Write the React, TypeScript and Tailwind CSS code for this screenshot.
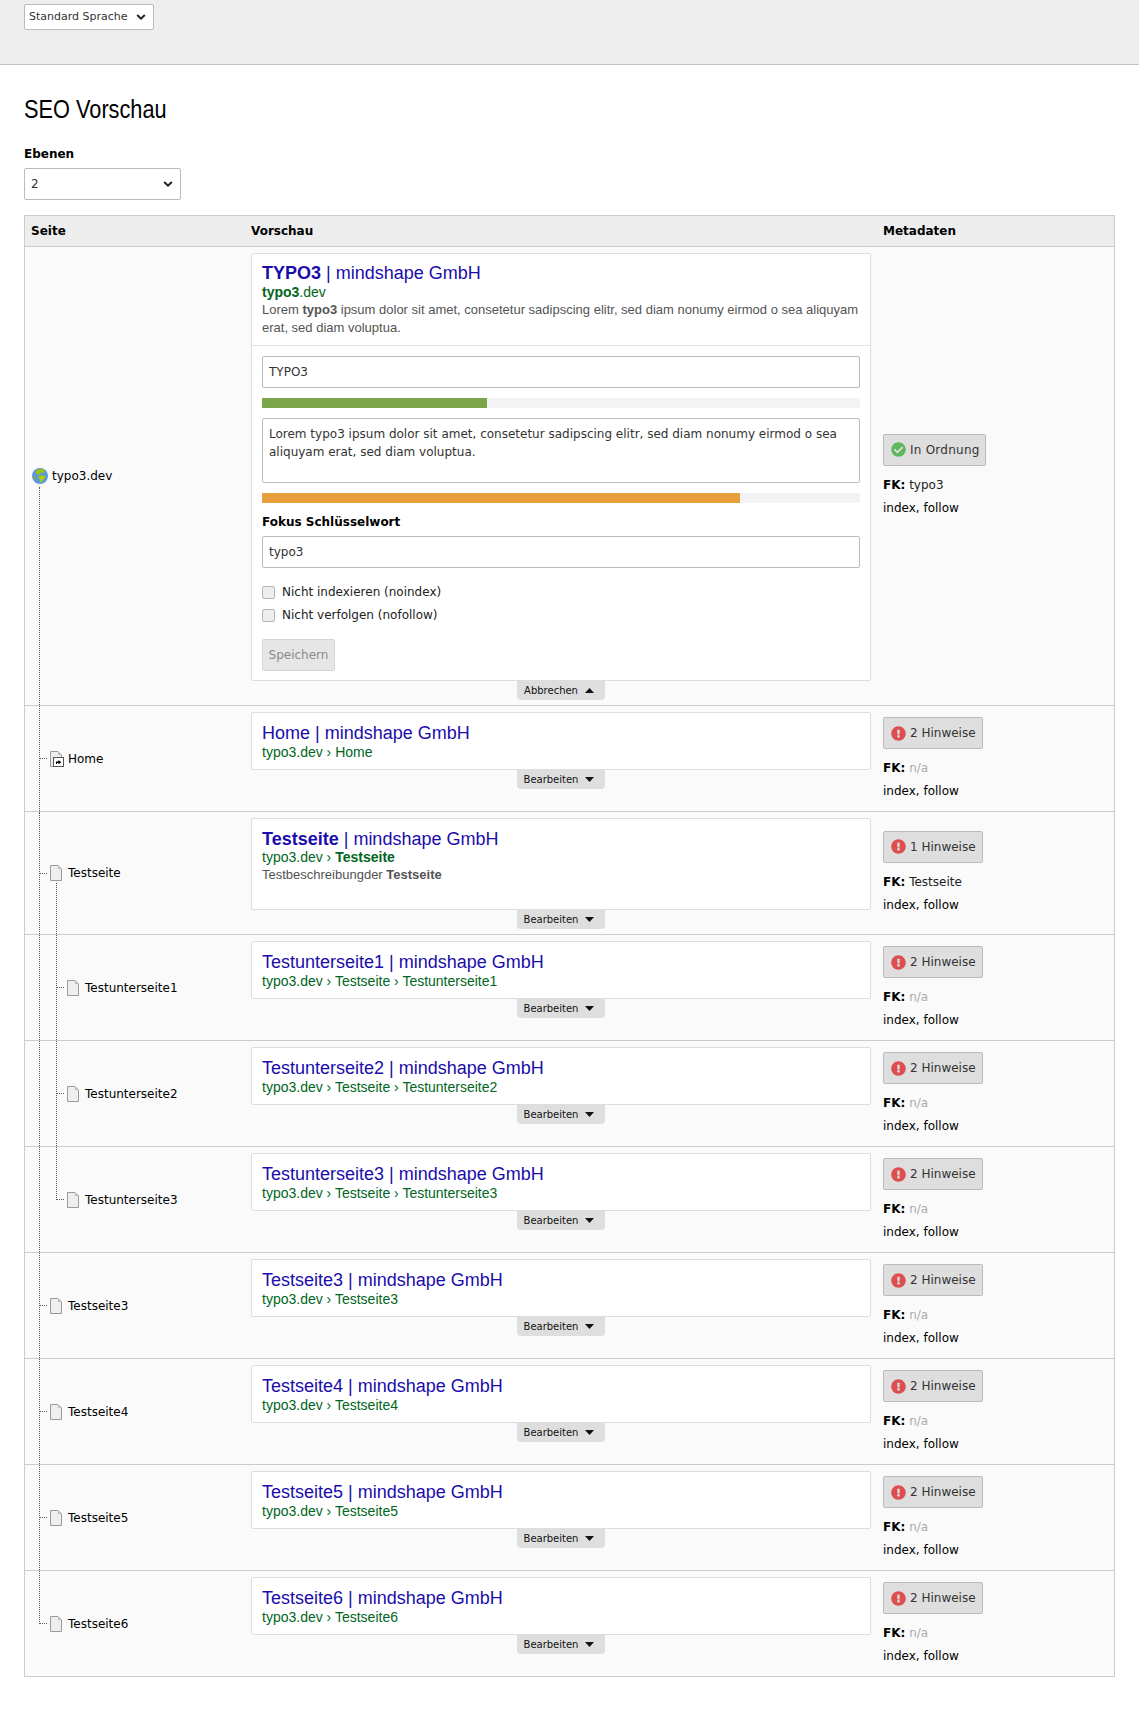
import { FaCheckCircle, FaExclamationCircle } from "react-icons/fa"

type Page = {
  name: string
  depth: 1 | 2
  crumbs: string[]
  hints: number
  focus?: string
  description?: string
  icon?: "shortcut"
  sub?: "start" | "middle" | "end"
  boldTitle?: boolean
}

const pages: Page[] = [
  { name: "Home", depth: 1, crumbs: ["Home"], hints: 2, icon: "shortcut" },
  {
    name: "Testseite",
    depth: 1,
    crumbs: ["Testseite"],
    hints: 1,
    focus: "Testseite",
    description: "Testseite",
    sub: "start",
    boldTitle: true,
  },
  { name: "Testunterseite1", depth: 2, crumbs: ["Testseite", "Testunterseite1"], hints: 2, sub: "middle" },
  { name: "Testunterseite2", depth: 2, crumbs: ["Testseite", "Testunterseite2"], hints: 2, sub: "middle" },
  { name: "Testunterseite3", depth: 2, crumbs: ["Testseite", "Testunterseite3"], hints: 2, sub: "end" },
  { name: "Testseite3", depth: 1, crumbs: ["Testseite3"], hints: 2 },
  { name: "Testseite4", depth: 1, crumbs: ["Testseite4"], hints: 2 },
  { name: "Testseite5", depth: 1, crumbs: ["Testseite5"], hints: 2 },
  { name: "Testseite6", depth: 1, crumbs: ["Testseite6"], hints: 2 },
]

function Chevron() {
  return (
    <svg width="10" height="7" viewBox="0 0 10 7" className="pointer-events-none absolute top-1/2 right-[8px] -translate-y-1/2">
      <path d="M1.2 1.5 5 5.2 8.8 1.5" fill="none" stroke="#222" strokeWidth="2" />
    </svg>
  )
}

function Caret({ up }: { up?: boolean }) {
  return (
    <svg width="9" height="5" viewBox="0 0 9 5">
      <path d={up ? "M0 5 4.5 0 9 5Z" : "M0 0 9 0 4.5 5Z"} fill="#111" />
    </svg>
  )
}

function Globe() {
  return (
    <svg width="16" height="16" viewBox="0 0 16 16" className="shrink-0">
      <circle cx="8" cy="8" r="8" fill="#5f97dc" />
      <path d="M6 1.2 10.5.8 13 3 11.5 5 9 4.6 8 6.5 4.5 6.2 3.6 4Z" fill="#9cc40c" />
      <path d="M7 7.5 12 7.4 13.6 9 11.6 11 10 14 8.4 14.4 8 11 6.6 9.6Z" fill="#a8d000" />
      <path d="M1 8 3 9 3.6 11.6 1.8 11Z" fill="#8ab414" />
    </svg>
  )
}

function PageIcon({ shortcut }: { shortcut?: boolean }) {
  return (
    <svg width="14" height="16" viewBox="0 0 14 16" className="shrink-0">
      <path d="M.5.5H8L11.5 4V15.5H.5Z" fill="#eeeeee" stroke="#9a9a9a" />
      <path d="M8 .8V4H11.2Z" fill="#bdbdbd" />
      {shortcut && (
        <g>
          <rect x="3.5" y="6.5" width="10" height="9" fill="#fff" stroke="#555" />
          <path d="M6 13V10.6H8.4V9L11.4 11.2 8.4 13.2V12H7V13Z" fill="#000" />
        </g>
      )}
    </svg>
  )
}

function TreeLines({ main, sub }: { main: "start" | "middle" | "end"; sub?: Page["sub"] }) {
  return (
    <>
      {main === "start" && <div className="absolute top-[calc(50%+11px)] bottom-0 left-[14px] border-l border-dotted border-[#555]" />}
      {main === "middle" && <div className="absolute top-0 bottom-0 left-[14px] border-l border-dotted border-[#555]" />}
      {main === "end" && <div className="absolute top-0 h-1/2 left-[14px] border-l border-dotted border-[#555]" />}
      {sub === "start" && <div className="absolute top-[calc(50%+10px)] bottom-0 left-[31px] border-l border-dotted border-[#555]" />}
      {sub === "middle" && <div className="absolute top-0 bottom-0 left-[31px] border-l border-dotted border-[#555]" />}
      {sub === "end" && <div className="absolute top-0 h-1/2 left-[31px] border-l border-dotted border-[#555]" />}
    </>
  )
}

function Snippet({ page }: { page: Page }) {
  return (
    <div className="px-[10px] pt-[10px] pb-[8px] font-['Liberation_Sans',Arial,sans-serif]">
      <div className="text-[18px] leading-[20px] text-[#1a0dab]">
        {page.boldTitle ? <b>{page.name}</b> : page.name} | mindshape GmbH
      </div>
      <div className={page.description ? "text-[14px] leading-[17px] text-[#006621]" : "text-[14px] leading-[18px] text-[#006621]"}>
        typo3.dev
        {page.crumbs.map((crumb) => (
          <span key={crumb}>
            {" › "}
            {page.boldTitle ? <b>{crumb}</b> : crumb}
          </span>
        ))}
      </div>
      {page.description && (
        <div className="h-[35px] text-[13px] leading-[17px] text-[#545454]">
          Testbeschreibungder <b>{page.description}</b>
        </div>
      )}
    </div>
  )
}

function EditTab({ label, up }: { label: string; up?: boolean }) {
  return (
    <div className="flex w-[620px] justify-center">
      <div className="flex h-[19px] items-center gap-[7px] rounded-b-[4px] bg-[#dedede] pr-[11px] pl-[7px] text-[10px] text-[#111]">
        {label}
        <Caret up={up} />
      </div>
    </div>
  )
}

function Status({ ok, label }: { ok?: boolean; label: string }) {
  return (
    <div
      className={
        ok
          ? "flex h-[32px] w-fit items-center gap-[4px] rounded-[2px] border border-[#bbbbbb] bg-[#dedede] pr-[5px] pl-[7px] tracking-[0.02em] text-[#333]"
          : "flex h-[32px] w-fit items-center gap-[4px] rounded-[2px] border border-[#bbbbbb] bg-[#dedede] pr-[6px] pl-[7px] text-[#333]"
      }
    >
      {ok ? <FaCheckCircle className="text-[15px] text-[#5cb85c]" /> : <FaExclamationCircle className="text-[15px] text-[#dd4f4f]" />}
      {label}
    </div>
  )
}

function Meta({ ok, label, focus, low }: { ok?: boolean; label: string; focus?: string; low?: boolean }) {
  return (
    <div className={low ? "flex items-center pt-[3px] pl-[7px]" : "flex items-center pt-[1px] pl-[7px]"}>
      <div>
        <Status ok={ok} label={label} />
        <div className="mt-[8px] leading-[23px]">
          <b>FK:</b> {focus ? <span className="text-[#222]">{focus}</span> : <span className="text-[#aaaaaa]">n/a</span>}
        </div>
        <div className="leading-[23px]">index, follow</div>
      </div>
    </div>
  )
}

const rowClass = "relative grid grid-cols-[219px_632px_1fr] border-t border-[#cccccc]"
const fieldClass = "block w-full rounded-[2px] border border-[#bbbbbb] bg-white px-[6px] text-[#333] outline-none"
const checkClass = "h-[13px] w-[13px] translate-y-[1px] appearance-none rounded-[2px] border border-[#b5b5b5] bg-[#eeeeee]"

export default function App() {
  return (
    <div className="min-h-[1719px] bg-white font-['DejaVu_Sans',Verdana,sans-serif] text-[12px] text-black">
      <div className="h-[65px] border-b border-[#c3c3c3] bg-[#eeeeee] px-6 pt-1">
        <div className="relative h-[26px] w-[130px]">
          <select className="h-full w-full appearance-none rounded-[2px] border border-[#bbbbbb] bg-white pl-[4px] text-[11px] text-[#333]">
            <option>Standard Sprache</option>
          </select>
          <Chevron />
        </div>
      </div>

      <div className="px-6 pb-[43px]">
        <h1 className="mt-[27px] origin-left scale-x-[0.87] font-['Liberation_Sans',sans-serif] text-[25px] leading-[34px] text-black">SEO Vorschau</h1>
        <div className="mt-[20px] leading-[16px] font-bold">Ebenen</div>
        <div className="relative mt-[6px] h-[32px] w-[157px]">
          <select className="h-full w-full appearance-none rounded-[2px] border border-[#bbbbbb] bg-white pl-[6px] text-[12px] text-[#333]">
            <option>2</option>
          </select>
          <Chevron />
        </div>

        <div className="mt-[15px] border border-[#cccccc] bg-[#fafafa]">
          <div className="grid h-[30px] grid-cols-[219px_632px_1fr] items-center bg-[#ededed] font-bold">
            <div className="pl-[6px]">Seite</div>
            <div className="pl-[7px]">Vorschau</div>
            <div className="pl-[7px]">Metadaten</div>
          </div>

          <div className={rowClass}>
            <TreeLines main="start" />
            <div className="flex items-center gap-[4px] pl-[7px]">
              <Globe />
              typo3.dev
            </div>
            <div className="pt-[6px] pr-[5px] pb-[5px] pl-[7px]">
              <div className="w-[620px] rounded-[2px] border border-[#dddddd] bg-white">
                <div className="border-b border-[#e3e3e3] px-[10px] pt-[9px] pb-[8px] font-['Liberation_Sans',Arial,sans-serif]">
                  <div className="text-[18px] leading-[20px] text-[#1a0dab]">
                    <b>TYPO3</b> | mindshape GmbH
                  </div>
                  <div className="text-[14px] leading-[18px] text-[#006621]">
                    <b>typo3</b>.dev
                  </div>
                  <div className="text-[13px] leading-[18px] text-[#545454]">
                    Lorem <b>typo3</b> ipsum dolor sit amet, consetetur sadipscing elitr, sed diam nonumy eirmod o sea aliquyam erat, sed diam voluptua.
                  </div>
                </div>
                <div className="px-[10px] pt-[10px] pb-[9px]">
                  <input readOnly value="TYPO3" className={`${fieldClass} h-[32px]`} />
                  <div className="mt-[10px] h-[10px] bg-[#f3f3f3]">
                    <div className="h-full w-[225px] bg-[#7aa648]" />
                  </div>
                  <textarea
                    readOnly
                    value="Lorem typo3 ipsum dolor sit amet, consetetur sadipscing elitr, sed diam nonumy eirmod o sea aliquyam erat, sed diam voluptua."
                    className={`${fieldClass} mt-[10px] h-[65px] resize-none py-[6px] leading-[18px]`}
                  />
                  <div className="mt-[10px] h-[10px] bg-[#f3f3f3]">
                    <div className="h-full w-[478px] bg-[#e8a03c]" />
                  </div>
                  <div className="mt-[10px] leading-[18px] font-bold">Fokus Schlüsselwort</div>
                  <input readOnly value="typo3" className={`${fieldClass} mt-[5px] h-[32px]`} />
                  <label className="mt-[12px] flex h-[23px] items-center gap-[7px] text-[#222]">
                    <input type="checkbox" className={checkClass} />
                    Nicht indexieren (noindex)
                  </label>
                  <label className="flex h-[23px] items-center gap-[7px] text-[#222]">
                    <input type="checkbox" className={checkClass} />
                    Nicht verfolgen (nofollow)
                  </label>
                  <button className="mt-[13px] flex h-[32px] w-[73px] items-center justify-center rounded-[2px] border border-[#d5d5d5] bg-[#e6e6e6] text-[#8a8a8a]">
                    Speichern
                  </button>
                </div>
              </div>
              <EditTab label="Abbrechen" up />
            </div>
            <Meta ok label="In Ordnung" focus="typo3" />
          </div>

          {pages.map((page, index) => (
            <div key={page.name} className={`${rowClass} min-h-[106px]`}>
              <TreeLines main={index === pages.length - 1 ? "end" : "middle"} sub={page.sub} />
              <div className={page.depth === 1 ? "flex items-center pl-[15px]" : "flex items-center pl-[32px]"}>
                <div className="mr-[3px] w-[7px] border-t border-dotted border-[#555]" />
                <PageIcon shortcut={page.icon === "shortcut"} />
                <span className="ml-[4px]">{page.name}</span>
              </div>
              <div className="pt-[6px] pr-[5px] pb-[5px] pl-[7px]">
                <div className="w-[620px] rounded-[2px] border border-[#dddddd] bg-white">
                  <Snippet page={page} />
                </div>
                <EditTab label="Bearbeiten" />
              </div>
              <Meta label={`${page.hints} Hinweise`} focus={page.focus} low={!page.description} />
            </div>
          ))}
        </div>
      </div>
    </div>
  )
}
